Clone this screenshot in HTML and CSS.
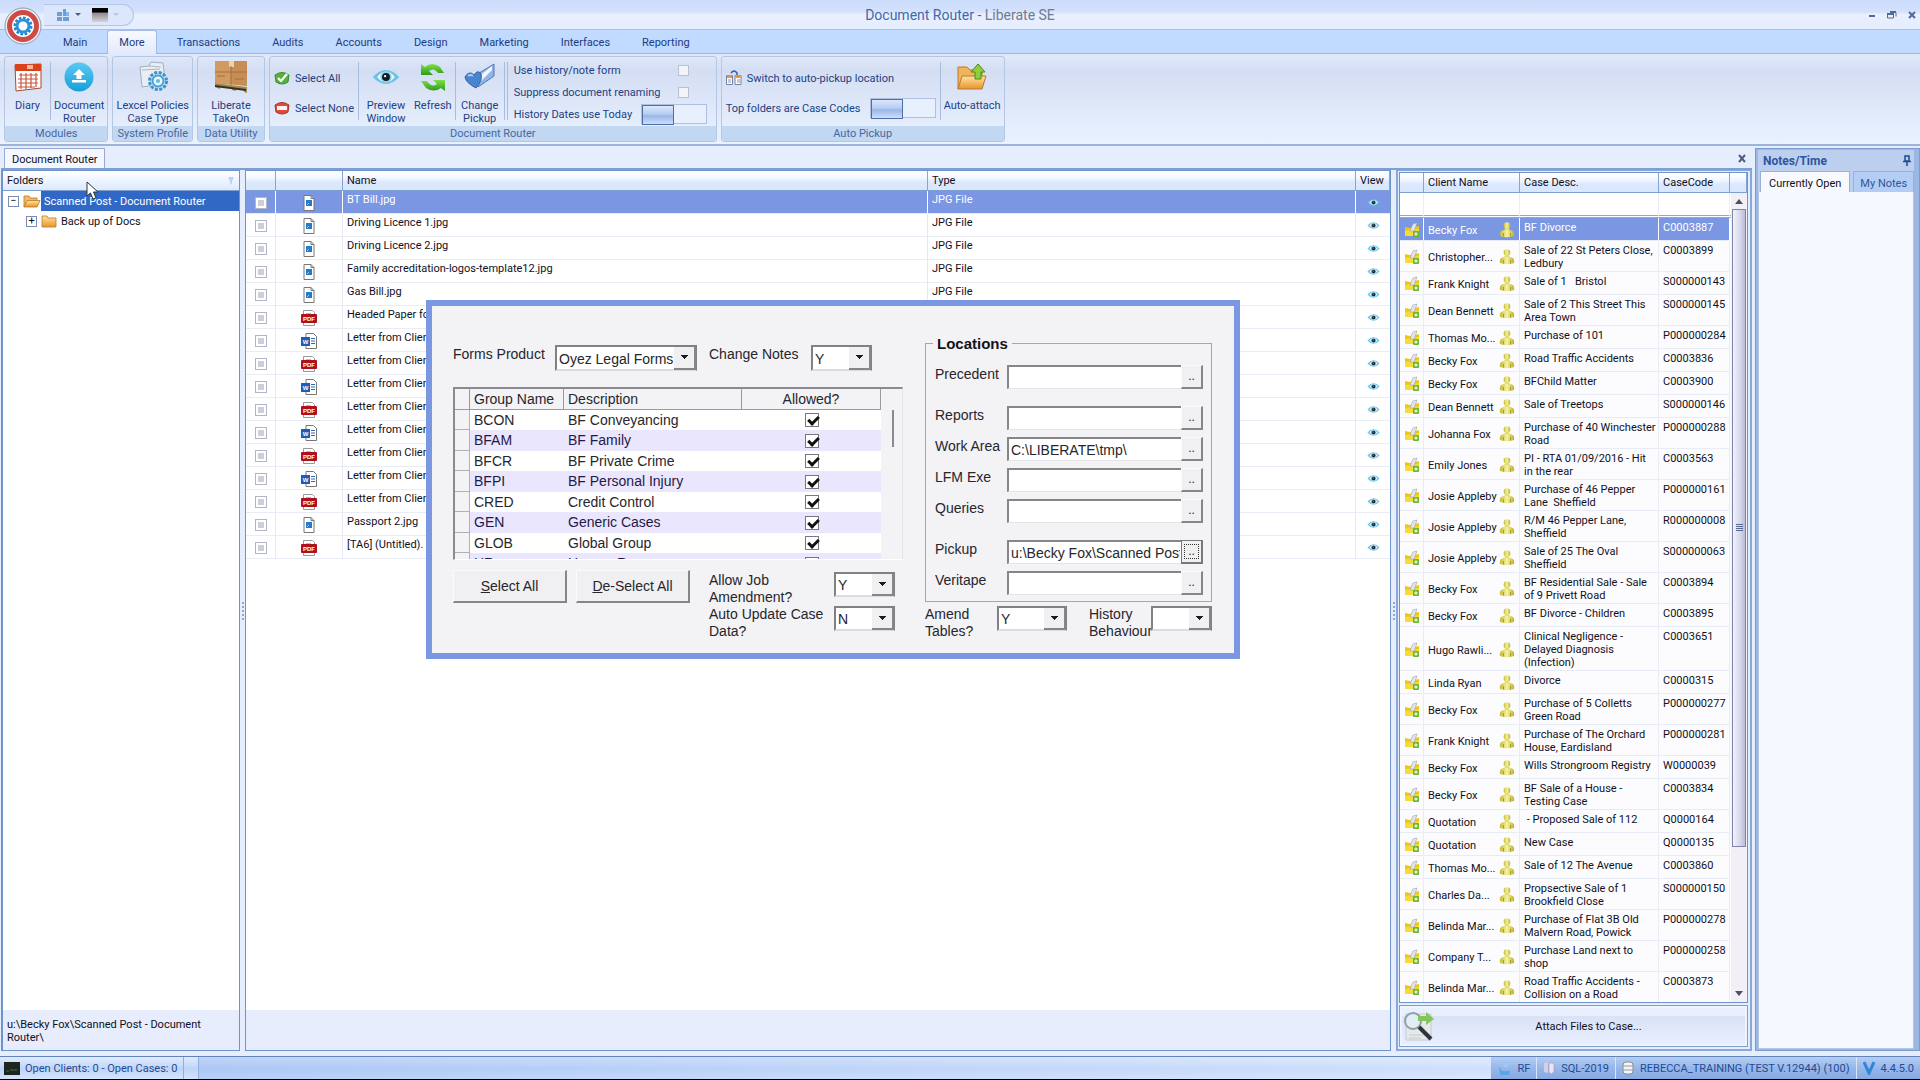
FILE: index.html
```html
<!DOCTYPE html>
<html lang="en">
<head>
	<meta charset="UTF-8">
	<meta name="viewport" content="width=device-width, initial-scale=1">
	<title>Document Router - Liberate SE</title>
	<link rel="stylesheet" href="styles.css">
</head>
<body>
<svg class="defs" aria-hidden="true">
	<defs>
		<linearGradient id="g-folder" x2="0" y2="1"><stop offset="0" stop-color="#ffe3a0"/><stop offset="1" stop-color="#e8942c"/></linearGradient>
		<linearGradient id="g-blue" x2="0" y2="1"><stop offset="0" stop-color="#5cc8f2"/><stop offset="1" stop-color="#15a0d8"/></linearGradient>
		<linearGradient id="g-pawn" x2="1" y2="0"><stop offset="0" stop-color="#c4b92c"/><stop offset=".5" stop-color="#f6f3a4"/><stop offset="1" stop-color="#bdb026"/></linearGradient>
		<linearGradient id="g-green" x2="0" y2="1"><stop offset="0" stop-color="#7fe04a"/><stop offset="1" stop-color="#2c9a18"/></linearGradient>
	</defs>
</svg>
<svg class="symbols" aria-hidden="true">
	<symbol id="i-jpg" viewBox="0 0 16 16"><path d="M3 .5h7l3 3v12H3z" fill="#fff" stroke="#777"/><path d="M10 .5v3h3" fill="none" stroke="#777"/><rect x="5" y="5" width="6" height="6" fill="#1b7fd6"/><path d="M5 11l6-5v5z" fill="#3b6fc0"/><path d="M6 10l2-2" stroke="#8fd0ff"/></symbol>
	<symbol id="i-pdf" viewBox="0 0 16 16"><path d="M2.500 5V.5h9l2 2V5M2.500 12v3.500h11V12" fill="#fff" stroke="#999"/><path d="M5 3.500h5" stroke="#bbb"/><rect y="4" width="16" height="9" rx="1" fill="#b0101c"/><text x="8" y="11" text-anchor="middle" class="pdf-txt">PDF</text></symbol>
	<symbol id="i-doc" viewBox="0 0 16 16"><path d="M5 .5h7.500l3 3v12H5z" fill="#fff" stroke="#777"/><path d="M10 5.500h4M10 8h4M10 10.500h4" stroke="#2a68b8"/><rect y="4" width="9" height="9" fill="#1d5eb4"/><text x="4.500" y="11" text-anchor="middle" class="pdf-txt">W</text></symbol>
	<symbol id="i-eye" viewBox="0 0 32 18"><path d="M1 9Q8 1 16 1t15 8q-7 8-15 8T1 9z" fill="#6cc3e4"/><path d="M6 9q4-6 10-6t10 6q-4 6-10 6T6 9z" fill="#e9fbff"/><circle cx="16" cy="9" r="6.500" fill="#8fcfe8"/><circle cx="16" cy="9" r="4.500" fill="#111c28"/><circle cx="15" cy="8" r="1.300" fill="#fff"/></symbol>
	<symbol id="i-case" viewBox="0 0 16 16"><path d="M1 5l5 1 9-2v10H1z" fill="#ecc814"/><path d="M1 9l14-2v7H1z" fill="#f7dc35"/><path d="M6 9l3-7 4-1-3 8z" fill="#e6e6ee" stroke="#a9a9b8" stroke-width=".7"/><rect x="9" y="9" width="6" height="6" rx="1" fill="#6cb52c"/><path d="M12 10.200v3.600M10.200 12h3.600" stroke="#fff"/></symbol>
	<symbol id="i-pawn" viewBox="0 0 16 16"><circle cx="8" cy="3.500" r="3.300" fill="url(#g-pawn)"/><path d="M6 6h4l1 3H5z" fill="#e4df6a"/><path d="M1 14Q0 8.500 5 8h6q5 .5 4 6-7 2.500-14 0z" fill="url(#g-pawn)"/><path d="M4.500 11v3.500M11.500 11v3.500" stroke="#95901c" stroke-width=".8"/></symbol>
	<symbol id="i-folder" viewBox="0 0 16 14"><path d="M1 2h5l1 2h8v9H1z" fill="url(#g-folder)" stroke="#b87a2c" stroke-width=".8"/></symbol>
	<symbol id="i-folder-open" viewBox="0 0 18 14"><path d="M1 13V2h5l1 2h7v3" fill="#f3b765" stroke="#b87a2c" stroke-width=".8"/><path d="M4 6.500h13L14 13H1z" fill="url(#g-folder)" stroke="#b87a2c" stroke-width=".8"/></symbol>
</svg>

<header class="titlebar">
	<div class="quick">
		<button class="plain" aria-label="Layout"><svg width="14" height="14" viewBox="0 0 14 14"><path d="M1 4h5v4H1zM7 1h3v7H7zM1 9h5v4H1zM7 9h6v4H7z" fill="#6a9fd8"/><path d="M10 4h3v4h-3z" fill="#8ab6e6"/></svg><span class="caret"></span></button>
		<button class="plain" aria-label="Style"><span class="swatch"></span><span class="caret faint"></span></button>
	</div>
	<h1>Document Router - <span>Liberate SE</span></h1>
	<div class="winbtns">
		<button class="plain" aria-label="Minimise"><svg width="8" height="10"><path d="M1 6h6" stroke="#51699c" stroke-width="2"/></svg></button>
		<button class="plain" aria-label="Restore"><svg width="10" height="10"><path d="M3 2.500h6v4M.5 4h6v4h-6z" fill="none" stroke="#51699c"/><path d="M3 2h6M0 4h7" stroke="#51699c" stroke-width="2"/></svg></button>
		<button class="plain" aria-label="Close"><svg width="8" height="10"><path d="M1 2l6 6M7 2L1 8" stroke="#51699c" stroke-width="2"/></svg></button>
	</div>
</header>
<button class="orb" aria-label="Application menu">
	<svg width="38" height="38" viewBox="0 0 38 38"><circle cx="19" cy="19" r="18" fill="#eceef2" stroke="#8f9bb5"/><circle cx="19" cy="19" r="13.500" fill="#fff" stroke="#cf4a45" stroke-width="5"/><circle cx="19" cy="19" r="7.500" fill="none" stroke="#1e86d0" stroke-width="4" stroke-dasharray="2.400 1.500"/><circle cx="19" cy="19" r="6" fill="none" stroke="#2c93da" stroke-width="3"/></svg>
</button>

<nav class="tabs">
	<a href="#">Main</a>
	<a href="#" class="active">More</a>
	<a href="#">Transactions</a>
	<a href="#">Audits</a>
	<a href="#">Accounts</a>
	<a href="#">Design</a>
	<a href="#">Marketing</a>
	<a href="#">Interfaces</a>
	<a href="#">Reporting</a>
</nav>

<section class="ribbon">
	<div class="group">
		<div class="tools">
			<button class="big narrow"><svg width="32" height="32" viewBox="0 0 32 32"><path d="M3 4l26-1v24L4 30z" fill="#fff" stroke="#a8482e"/><path d="M3 3h26v7H3z" fill="#d8431c"/><path d="M15 4h6v4h-6z" fill="#f5b8a2"/><path d="M7 14h19M6 18h20M6 22h20M6 26h17M9 12v16M14 12v16M19 12v15M24 12v14" stroke="#c9553c" stroke-width="1.200"/></svg>Diary</button>
			<span class="sep"></span>
			<button class="big"><svg width="32" height="32" viewBox="0 0 32 32"><circle cx="16" cy="16" r="14.500" fill="url(#g-blue)"/><path d="M16 8l6 6h-3.500v4h-5v-4H10zM9 19h14v2.500H9z" fill="#fff"/></svg>Document<br>Router</button>
		</div>
		<div class="caption">Modules</div>
	</div>
	<div class="group profile">
		<div class="tools">
			<button class="big"><svg width="32" height="32" viewBox="0 0 32 32"><path d="M3 6l9-1 2-4 12 1 1 9v12L5 26z" fill="#e9eef4" stroke="#9fb0c0"/><path d="M12 5l12 1M5 9l18-1" stroke="#a9b6c4"/><circle cx="21" cy="20" r="8.500" fill="#cde8f6" stroke="#3d90c8" stroke-width="3" stroke-dasharray="3 1.500"/><circle cx="21" cy="20" r="5.500" fill="#e8f6ff" stroke="#4aa0d4" stroke-width="2"/><circle cx="21" cy="20" r="2" fill="#6ab4de"/></svg>Lexcel Policies<br>Case Type</button>
		</div>
		<div class="caption">System Profile</div>
	</div>
	<div class="group utility">
		<div class="tools">
			<button class="big"><svg width="32" height="32" viewBox="0 0 32 32"><path d="M0 0h32v25L0 22z" fill="#c68d55"/><path d="M0 0h16v23L0 22z" fill="#d09a62"/><path d="M14 0h5v6h-5z" fill="#ead0ac"/><path d="M0 11h32M16 5v19M2 15h8M20 18h9" stroke="#a76d3c"/><path d="M0 22l32 4v6l-3-1v-2l-8-1v2l-4-1v-2L5 26v2l-5-2z" fill="#a58a50"/><path d="M0 25l31 4" stroke="#3c3020" stroke-width="2"/></svg>Liberate<br>TakeOn</button>
		</div>
		<div class="caption">Data Utility</div>
	</div>
	<div class="group">
		<div class="tools">
			<div class="stack">
				<button class="small"><svg width="16" height="16" viewBox="0 0 16 16"><path d="M1 5q7-5 14 0l-1 7q-6 4-12 0z" fill="#55b03c" stroke="#3f8a2e"/><path d="M4 8l3 3 6-7" fill="none" stroke="#fff" stroke-width="2.200"/></svg>Select All</button>
				<button class="small"><svg width="16" height="16" viewBox="0 0 16 16"><path d="M1 5q7-5 14 0l-1 7q-6 4-12 0z" fill="#e04a38" stroke="#a83428"/><path d="M3 6h10v4H3z" fill="#fff3f0"/></svg>Select None</button>
			</div>
			<span class="sep"></span>
			<button class="big"><svg width="32" height="32" viewBox="0 0 32 32"><use href="#i-eye" x="2" y="7" width="28" height="18"/></svg>Preview<br>Window</button>
			<button class="big refresh"><svg width="32" height="32" viewBox="0 0 32 32"><path d="M4 3l4 3q7-6 15 0l4 6h-6q-4-6-9-2l4 4H4z" fill="url(#g-green)"/><path d="M28 30l-4-3q-7 5-15 0l-5-7h6q5 7 10 3l-4-4h12z" fill="url(#g-green)"/></svg>Refresh</button>
			<span class="sep"></span>
			<button class="big pickup"><svg width="32" height="32" viewBox="0 0 32 32"><path d="M12 14L30 3v12L14 26z" fill="#8fb6e6" stroke="#4f78b8"/><path d="M13 17L28 5v4L15 22z" fill="#f2f7ff"/><path d="M1 16q4-7 9-2 4-6 7-1 2 6-5 14Q2 22 1 16z" fill="#4a84cf" stroke="#2f62a8"/><path d="M4 15q2-2 5 0" stroke="#a8cdf4" stroke-width="2" fill="none"/></svg>Change<br>Pickup</button>
			<span class="sep"></span>
			<span class="sep"></span>
			<div class="options">
				<div class="opt"><label for="o-hist">Use history/note form</label><input type="checkbox" id="o-hist"></div>
				<div class="opt"><label for="o-supp">Suppress document renaming</label><input type="checkbox" id="o-supp"></div>
				<div class="opt"><label for="o-today">History Dates use Today</label><input type="checkbox" role="switch" class="switch" id="o-today"></div>
			</div>
		</div>
		<div class="caption">Document Router</div>
	</div>
	<div class="group">
		<div class="tools">
			<div class="stack">
				<button class="small"><svg width="16" height="16" viewBox="0 0 16 16"><path d="M.5 5.500h6v9h-6zM9 5.500h6v9H9z" fill="#fff" stroke="#7484a8"/><path d="M1 5h5v3H1zM9.500 5h5v3h-5z" fill="#f09038"/><path d="M2 10h3M2 12h3M11 10h3M11 12h3" stroke="#8898b8"/><path d="M5 3q3-4 6 0v2" fill="none" stroke="#3460a8" stroke-width="1.500"/></svg>Switch to auto-pickup location</button>
				<div class="small"><label for="o-top">Top folders are Case Codes</label><input type="checkbox" role="switch" class="switch" id="o-top"></div>
			</div>
			<span class="sep"></span>
			<button class="big"><svg width="32" height="32" viewBox="0 0 32 32"><path d="M2 28V6h9l3 3h12v6" fill="#f0b45a" stroke="#b87a2c"/><path d="M6 15h24l-4 13H2z" fill="url(#g-folder)" stroke="#b87a2c"/><path d="M22 3l7 8h-4v7h-6v-7h-4z" fill="#8fcf3a" stroke="#4a8a1c"/></svg>Auto-attach</button>
		</div>
		<div class="caption">Auto Pickup</div>
	</div>
</section>

<main class="workspace">
	<div class="docs">
		<div class="doctabs">
			<a href="#">Document Router</a>
			<button class="plain" aria-label="Close tab"><svg width="8" height="9"><path d="M1 1l6 7M7 1L1 8" stroke="#4c5c80" stroke-width="2"/></svg></button>
		</div>
		<div class="panes">
			<section class="folders">
				<h2>Folders <svg width="8" height="10"><path d="M1 1h6L5 5v4L3 7V5z" fill="#b4d4f8"/></svg></h2>
				<ul class="tree">
					<li class="selected"><button class="exp">&minus;</button><svg width="18" height="14"><use href="#i-folder-open"/></svg><span>Scanned Post - Document Router</span></li>
					<li class="child"><button class="exp">+</button><svg width="16" height="14"><use href="#i-folder"/></svg><span>Back up of Docs</span></li>
				</ul>
				<p class="path">u:\Becky Fox\Scanned Post - Document Router\</p>
			</section>
			<div class="split"></div>
			<section class="files">
				<table>
					<colgroup><col class="w-chk"><col class="w-ico"><col class="w-name"><col class="w-type"><col class="w-view"></colgroup>
					<thead><tr><th></th><th></th><th>Name</th><th>Type</th><th>View</th></tr></thead>
					<tbody>
						<tr class="selected"><td><input type="checkbox" aria-label="BT Bill"></td><td><svg><use href="#i-jpg"/></svg></td><td>BT Bill.jpg</td><td>JPG File</td><td><svg><use href="#i-eye"/></svg></td></tr>
						<tr><td><input type="checkbox" aria-label="Driving Licence 1"></td><td><svg><use href="#i-jpg"/></svg></td><td>Driving Licence 1.jpg</td><td>JPG File</td><td><svg><use href="#i-eye"/></svg></td></tr>
						<tr><td><input type="checkbox" aria-label="Driving Licence 2"></td><td><svg><use href="#i-jpg"/></svg></td><td>Driving Licence 2.jpg</td><td>JPG File</td><td><svg><use href="#i-eye"/></svg></td></tr>
						<tr><td><input type="checkbox" aria-label="Family accreditation"></td><td><svg><use href="#i-jpg"/></svg></td><td>Family accreditation-logos-template12.jpg</td><td>JPG File</td><td><svg><use href="#i-eye"/></svg></td></tr>
						<tr><td><input type="checkbox" aria-label="Gas Bill"></td><td><svg><use href="#i-jpg"/></svg></td><td>Gas Bill.jpg</td><td>JPG File</td><td><svg><use href="#i-eye"/></svg></td></tr>
						<tr><td><input type="checkbox" aria-label="Headed Paper"></td><td><svg><use href="#i-pdf"/></svg></td><td>Headed Paper fo</td><td></td><td><svg><use href="#i-eye"/></svg></td></tr>
						<tr><td><input type="checkbox" aria-label="Letter 1"></td><td><svg><use href="#i-doc"/></svg></td><td>Letter from Client</td><td></td><td><svg><use href="#i-eye"/></svg></td></tr>
						<tr><td><input type="checkbox" aria-label="Letter 2"></td><td><svg><use href="#i-pdf"/></svg></td><td>Letter from Client</td><td></td><td><svg><use href="#i-eye"/></svg></td></tr>
						<tr><td><input type="checkbox" aria-label="Letter 3"></td><td><svg><use href="#i-doc"/></svg></td><td>Letter from Client</td><td></td><td><svg><use href="#i-eye"/></svg></td></tr>
						<tr><td><input type="checkbox" aria-label="Letter 4"></td><td><svg><use href="#i-pdf"/></svg></td><td>Letter from Client</td><td></td><td><svg><use href="#i-eye"/></svg></td></tr>
						<tr><td><input type="checkbox" aria-label="Letter 5"></td><td><svg><use href="#i-doc"/></svg></td><td>Letter from Client</td><td></td><td><svg><use href="#i-eye"/></svg></td></tr>
						<tr><td><input type="checkbox" aria-label="Letter 6"></td><td><svg><use href="#i-pdf"/></svg></td><td>Letter from Client</td><td></td><td><svg><use href="#i-eye"/></svg></td></tr>
						<tr><td><input type="checkbox" aria-label="Letter 7"></td><td><svg><use href="#i-doc"/></svg></td><td>Letter from Client</td><td></td><td><svg><use href="#i-eye"/></svg></td></tr>
						<tr><td><input type="checkbox" aria-label="Letter 8"></td><td><svg><use href="#i-pdf"/></svg></td><td>Letter from Client</td><td></td><td><svg><use href="#i-eye"/></svg></td></tr>
						<tr><td><input type="checkbox" aria-label="Passport 2"></td><td><svg><use href="#i-jpg"/></svg></td><td>Passport 2.jpg</td><td></td><td><svg><use href="#i-eye"/></svg></td></tr>
						<tr><td><input type="checkbox" aria-label="TA6"></td><td><svg><use href="#i-pdf"/></svg></td><td>[TA6] (Untitled).</td><td></td><td><svg><use href="#i-eye"/></svg></td></tr>
					</tbody>
				</table>
				<div class="files-foot"></div>
			</section>
			<div class="split"></div>
			<section class="cases">
				<div class="case-list">
					<table>
						<colgroup><col class="w-c1"><col class="w-c2"><col class="w-c3"><col><col class="w-c5"><col class="w-c6"></colgroup>
						<thead><tr><th></th><th colspan="2">Client Name</th><th>Case Desc.</th><th>CaseCode</th><th></th></tr></thead>
						<tbody>
							<tr class="filter"><td></td><td colspan="2"></td><td></td><td></td><td></td></tr>
							<tr class="selected"><td><svg><use href="#i-case"/></svg></td><td>Becky Fox</td><td><svg><use href="#i-pawn"/></svg></td><td>BF Divorce</td><td>C0003887</td><td></td></tr>
							<tr><td><svg><use href="#i-case"/></svg></td><td>Christopher...</td><td><svg><use href="#i-pawn"/></svg></td><td>Sale of 22 St Peters Close, Ledbury</td><td>C0003899</td><td></td></tr>
							<tr><td><svg><use href="#i-case"/></svg></td><td>Frank Knight</td><td><svg><use href="#i-pawn"/></svg></td><td>Sale of 1 &nbsp; Bristol</td><td>S000000143</td><td></td></tr>
							<tr><td><svg><use href="#i-case"/></svg></td><td>Dean Bennett</td><td><svg><use href="#i-pawn"/></svg></td><td>Sale of 2 This Street This<br>Area Town</td><td>S000000145</td><td></td></tr>
							<tr><td><svg><use href="#i-case"/></svg></td><td>Thomas Mo...</td><td><svg><use href="#i-pawn"/></svg></td><td>Purchase of 101</td><td>P000000284</td><td></td></tr>
							<tr><td><svg><use href="#i-case"/></svg></td><td>Becky Fox</td><td><svg><use href="#i-pawn"/></svg></td><td>Road Traffic Accidents</td><td>C0003836</td><td></td></tr>
							<tr><td><svg><use href="#i-case"/></svg></td><td>Becky Fox</td><td><svg><use href="#i-pawn"/></svg></td><td>BFChild Matter</td><td>C0003900</td><td></td></tr>
							<tr><td><svg><use href="#i-case"/></svg></td><td>Dean Bennett</td><td><svg><use href="#i-pawn"/></svg></td><td>Sale of Treetops</td><td>S000000146</td><td></td></tr>
							<tr><td><svg><use href="#i-case"/></svg></td><td>Johanna Fox</td><td><svg><use href="#i-pawn"/></svg></td><td>Purchase of 40 Winchester<br>Road</td><td>P000000288</td><td></td></tr>
							<tr><td><svg><use href="#i-case"/></svg></td><td>Emily Jones</td><td><svg><use href="#i-pawn"/></svg></td><td>PI - RTA 01/09/2016 - Hit<br>in the rear</td><td>C0003563</td><td></td></tr>
							<tr><td><svg><use href="#i-case"/></svg></td><td>Josie Appleby</td><td><svg><use href="#i-pawn"/></svg></td><td>Purchase of 46 Pepper<br>Lane&nbsp; Sheffield</td><td>P000000161</td><td></td></tr>
							<tr><td><svg><use href="#i-case"/></svg></td><td>Josie Appleby</td><td><svg><use href="#i-pawn"/></svg></td><td>R/M 46 Pepper Lane,<br>Sheffield</td><td>R000000008</td><td></td></tr>
							<tr><td><svg><use href="#i-case"/></svg></td><td>Josie Appleby</td><td><svg><use href="#i-pawn"/></svg></td><td>Sale of 25 The Oval<br>Sheffield</td><td>S000000063</td><td></td></tr>
							<tr><td><svg><use href="#i-case"/></svg></td><td>Becky Fox</td><td><svg><use href="#i-pawn"/></svg></td><td>BF Residential Sale - Sale<br>of 9 Privett Road</td><td>C0003894</td><td></td></tr>
							<tr><td><svg><use href="#i-case"/></svg></td><td>Becky Fox</td><td><svg><use href="#i-pawn"/></svg></td><td>BF Divorce - Children</td><td>C0003895</td><td></td></tr>
							<tr><td><svg><use href="#i-case"/></svg></td><td>Hugo Rawli...</td><td><svg><use href="#i-pawn"/></svg></td><td>Clinical Negligence -<br>Delayed Diagnosis<br>(Infection)</td><td>C0003651</td><td></td></tr>
							<tr><td><svg><use href="#i-case"/></svg></td><td>Linda Ryan</td><td><svg><use href="#i-pawn"/></svg></td><td>Divorce</td><td>C0000315</td><td></td></tr>
							<tr><td><svg><use href="#i-case"/></svg></td><td>Becky Fox</td><td><svg><use href="#i-pawn"/></svg></td><td>Purchase of 5 Colletts<br>Green Road</td><td>P000000277</td><td></td></tr>
							<tr><td><svg><use href="#i-case"/></svg></td><td>Frank Knight</td><td><svg><use href="#i-pawn"/></svg></td><td>Purchase of The Orchard<br>House, Eardisland</td><td>P000000281</td><td></td></tr>
							<tr><td><svg><use href="#i-case"/></svg></td><td>Becky Fox</td><td><svg><use href="#i-pawn"/></svg></td><td>Wills Strongroom Registry</td><td>W0000039</td><td></td></tr>
							<tr><td><svg><use href="#i-case"/></svg></td><td>Becky Fox</td><td><svg><use href="#i-pawn"/></svg></td><td>BF Sale of a House -<br>Testing Case</td><td>C0003834</td><td></td></tr>
							<tr><td><svg><use href="#i-case"/></svg></td><td>Quotation</td><td><svg><use href="#i-pawn"/></svg></td><td>&nbsp;- Proposed Sale of 112</td><td>Q0000164</td><td></td></tr>
							<tr><td><svg><use href="#i-case"/></svg></td><td>Quotation</td><td><svg><use href="#i-pawn"/></svg></td><td>New Case</td><td>Q0000135</td><td></td></tr>
							<tr><td><svg><use href="#i-case"/></svg></td><td>Thomas Mo...</td><td><svg><use href="#i-pawn"/></svg></td><td>Sale of 12 The Avenue</td><td>C0003860</td><td></td></tr>
							<tr><td><svg><use href="#i-case"/></svg></td><td>Charles Da...</td><td><svg><use href="#i-pawn"/></svg></td><td>Propsective Sale of 1<br>Brookfield Close</td><td>S000000150</td><td></td></tr>
							<tr><td><svg><use href="#i-case"/></svg></td><td>Belinda Mar...</td><td><svg><use href="#i-pawn"/></svg></td><td>Purchase of Flat 3B Old<br>Malvern Road, Powick</td><td>P000000278</td><td></td></tr>
							<tr><td><svg><use href="#i-case"/></svg></td><td>Company T...</td><td><svg><use href="#i-pawn"/></svg></td><td>Purchase Land next to<br>shop</td><td>P000000258</td><td></td></tr>
							<tr><td><svg><use href="#i-case"/></svg></td><td>Belinda Mar...</td><td><svg><use href="#i-pawn"/></svg></td><td>Road Traffic Accidents -<br>Collision on a Road</td><td>C0003873</td><td></td></tr>
						</tbody>
					</table>
					<div class="scroll"><i class="up"></i><span class="thumb"></span><i class="down"></i></div>
				</div>
				<button class="attach"><svg width="30" height="32" viewBox="0 0 30 32"><path d="M2 4h25v26H2z" fill="#e6e9ea" stroke="#c4ccd0"/><path d="M5 25h20M5 28h12" stroke="#c8cccf"/><circle cx="9" cy="11" r="8" fill="#dfeef4" fill-opacity=".85" stroke="#8fa0a8" stroke-width="2"/><path d="M15 17l12 12" stroke="#30343a" stroke-width="4"/><path d="M14 6h8V2l8 7-8 6v-4h-8z" fill="#86c460"/></svg><span>Attach Files to Case...</span></button>
			</section>
		</div>
	</div>
	<aside class="notes">
		<h2>Notes/Time <svg width="8" height="11"><path d="M2 1h4v5H2zM0 6.500h8M4 7v4" fill="none" stroke="#204a94" stroke-width="1.500"/></svg></h2>
		<div class="notes-tabs"><a href="#" class="active">Currently Open</a><a href="#">My Notes</a></div>
		<div class="notes-body"></div>
	</aside>
</main>

<footer class="status">
	<span class="cell first"><svg width="16" height="13"><path d="M0 0h16v13H0z" fill="#1b261e"/><path d="M2 9h3M6 8h7" stroke="#4a6a4c"/></svg>Open Clients: 0 - Open Cases: 0</span>
	<span class="cell gap"></span>
	<span class="fill"></span>
	<span class="cell dark"><svg width="14" height="14"><circle cx="9" cy="4" r="2.500" fill="#9ccaf5"/><path d="M2 6l3 4h8l-1 4H3z" fill="#5ea4ea"/></svg>RF</span>
	<span class="cell dark"><svg width="12" height="14"><path d="M1 2l4-1v11l-4-1z" fill="#d8cde6"/><path d="M6 2h5v9l-3 2-2-2z" fill="#ece4ee" stroke="#b09ab8" stroke-width=".7"/></svg>SQL-2019</span>
	<span class="cell dark"><svg width="12" height="14"><rect x="1" y="1" width="10" height="12" rx="3" fill="#f4f4f4" stroke="#8c8c94"/><path d="M1 5h10M1 9h10" stroke="#9a9aa2"/></svg>REBECCA_TRAINING (TEST V.12944) (100)</span>
	<span class="cell dark last"><svg width="12" height="14"><path d="M1 1l5 11 5-11" fill="none" stroke="#2f86d8" stroke-width="3"/></svg>4.4.5.0</span>
</footer>

<form class="dialog" role="dialog" aria-label="Forms and locations">
	<div class="left">
		<div class="line">
			<label for="d-form">Forms Product</label>
			<span class="combo forms"><select id="d-form"><option>Oyez Legal Forms Suite</option></select></span>
			<label for="d-notes">Change Notes</label>
			<span class="combo"><select id="d-notes"><option>Y</option><option>N</option></select></span>
		</div>
		<div class="groups">
			<table>
				<colgroup><col class="w-g1"><col class="w-g2"><col class="w-g3"><col></colgroup>
				<thead><tr><th></th><th>Group Name</th><th>Description</th><th>Allowed?</th></tr></thead>
				<tbody>
					<tr><td></td><td>BCON</td><td>BF Conveyancing</td><td><input type="checkbox" aria-label="BCON" checked></td></tr>
					<tr><td></td><td>BFAM</td><td>BF Family</td><td><input type="checkbox" aria-label="BFAM" checked></td></tr>
					<tr><td></td><td>BFCR</td><td>BF Private Crime</td><td><input type="checkbox" aria-label="BFCR" checked></td></tr>
					<tr><td></td><td>BFPI</td><td>BF Personal Injury</td><td><input type="checkbox" aria-label="BFPI" checked></td></tr>
					<tr><td></td><td>CRED</td><td>Credit Control</td><td><input type="checkbox" aria-label="CRED" checked></td></tr>
					<tr><td></td><td>GEN</td><td>Generic Cases</td><td><input type="checkbox" aria-label="GEN" checked></td></tr>
					<tr><td></td><td>GLOB</td><td>Global Group</td><td><input type="checkbox" aria-label="GLOB" checked></td></tr>
					<tr><td></td><td>HR</td><td>Human Resources</td><td><input type="checkbox" aria-label="HR" checked></td></tr>
				</tbody>
			</table>
			<span class="bar"></span>
		</div>
		<div class="actions">
			<button type="button"><u>S</u>elect All</button>
			<button type="button"><u>D</u>e-Select All</button>
			<div class="pairs">
				<label for="d-job">Allow Job Amendment?</label>
				<span class="combo"><select id="d-job"><option>Y</option><option>N</option></select></span>
				<label for="d-auto">Auto Update Case Data?</label>
				<span class="combo"><select id="d-auto"><option>N</option><option>Y</option></select></span>
			</div>
		</div>
	</div>
	<div class="right">
		<fieldset>
			<legend>Locations</legend>
			<div class="loc after"><label for="l-pre">Precedent</label><input type="text" id="l-pre"><button type="button">..</button></div>
			<div class="loc"><label for="l-rep">Reports</label><input type="text" id="l-rep"><button type="button">..</button></div>
			<div class="loc"><label for="l-work">Work Area</label><input type="text" id="l-work" value="C:\LIBERATE\tmp\"><button type="button">..</button></div>
			<div class="loc"><label for="l-lfm">LFM Exe</label><input type="text" id="l-lfm"><button type="button">..</button></div>
			<div class="loc after"><label for="l-que">Queries</label><input type="text" id="l-que"><button type="button">..</button></div>
			<div class="loc"><label for="l-pick">Pickup</label><input type="text" id="l-pick" value="u:\Becky Fox\Scanned Post"><button type="button" class="focus"><span>..</span></button></div>
			<div class="loc"><label for="l-ver">Veritape</label><input type="text" id="l-ver"><button type="button">..</button></div>
		</fieldset>
		<div class="amend">
			<label for="d-amend">Amend Tables?</label>
			<span class="combo"><select id="d-amend"><option>Y</option><option>N</option></select></span>
			<label for="d-hist">History Behaviour</label>
			<span class="combo"><select id="d-hist"><option></option></select></span>
		</div>
	</div>
</form>

<svg class="cursor" width="14" height="20" viewBox="0 0 14 20" aria-hidden="true"><path d="M1 1v14l3.500-3 2.500 6 3-1-2.500-6H12z" fill="#fff" stroke="#333"/></svg>
</body>
</html>
```

FILE: styles.css
```css
* { box-sizing: border-box; }
body {
	margin: 0;
	height: 100vh;
	display: flex;
	flex-direction: column;
	position: relative;
	overflow: hidden;
	background: #e6eefe;
	color: #10101c;
	font: 11px/13px Roboto, "Liberation Sans", sans-serif;
}
a { color: inherit; text-decoration: none; }
h1, h2, p, ul { margin: 0; padding: 0; font-size: 11px; font-weight: normal; }
button, input, select { font: inherit; color: inherit; margin: 0; }
table { border-collapse: separate; border-spacing: 0; table-layout: fixed; width: 100%; }
svg { flex: none; }
.defs { position: absolute; width: 0; height: 0; }
.symbols { display: none; }
.pdf-txt { font: bold 6px "Liberation Sans", sans-serif; fill: #fff; }
.plain {
	display: flex;
	align-items: center;
	gap: 5px;
	padding: 0;
	border: 0;
	background: none;
}

/* title bar */
.titlebar {
	display: grid;
	grid-template-columns: 1fr auto 1fr;
	align-items: center;
	height: 30px;
	padding: 0 4px;
	background: linear-gradient(#cbdcfb, #d3e1fb 40%, #e9effe 50%, #e4edfe);
	border-bottom: 1px solid #a6c2ec;
}
.titlebar h1 { font-size: 14px; line-height: 18px; color: #3e69aa; }
.titlebar h1 span { color: #6d7b95; }
.quick {
	justify-self: start;
	display: flex;
	gap: 11px;
	height: 22px;
	margin-left: 40px;
	padding: 0 14px 0 12px;
	border: 1px solid #b2c6ea;
	border-left: 0;
	border-radius: 0 11px 11px 0;
	background: #dce7fb;
}
.caret { border: 3px solid transparent; border-top-color: #47618e; border-bottom: 0; }
.caret.faint { border-top-color: #bac6dd; }
.swatch { width: 16px; height: 14px; background: linear-gradient(#000 30%, #8e8c90 35%, #d4d2d8); }
.winbtns { justify-self: end; display: flex; gap: 11px; }
.orb {
	position: absolute;
	left: 4px;
	top: 7px;
	z-index: 2;
	padding: 0;
	border: 0;
	background: none;
}

/* ribbon */
.tabs {
	display: flex;
	gap: 8px;
	height: 24px;
	padding: 0 51px;
	background: #c1daff;
	border-bottom: 1px solid #9db7e4;
	color: #1d3c80;
}
.tabs a { padding: 6px 12px 0; height: 24px; line-height: 14px; }
.tabs .active {
	background: linear-gradient(#f6f9ff, #e3eafa);
	border: 1px solid #a3bbe6;
	border-bottom: 0;
	border-radius: 3px 3px 0 0;
	padding: 5px 11px 0;
}
.ribbon {
	display: flex;
	gap: 4px;
	height: 92px;
	padding: 2px 4px;
	background: linear-gradient(#e2eafa, #d4def3 18%, #dde6f8 50%, #e9f3ff);
	border-bottom: 2px solid #9db4d8;
	color: #223f83;
}
.group {
	display: flex;
	flex-direction: column;
	border: 1px solid #b4c6e6;
	border-radius: 3px;
}
.tools { display: flex; flex: 1; padding: 0 1px; }
.caption { height: 15px; line-height: 16px; background: #c2d7f2; color: #46689f; text-align: center; }
.big {
	display: flex;
	flex-direction: column;
	align-items: center;
	min-width: 52px;
	padding: 4px 2px 0;
	border: 0;
	background: none;
	text-align: center;
	white-space: nowrap;
}
.big svg { margin-bottom: 6px; }
.big.narrow { min-width: 43px; }
.refresh { min-width: 38px; }
.pickup { min-width: 46px; }
.profile .tools, .utility .tools { min-width: 66px; justify-content: center; }
.sep { width: 1px; margin: 5px 1px 6px; background: #a9bcdf; }
.stack { display: flex; flex-direction: column; gap: 8px; padding: 10px 3px 0; }
.small {
	display: flex;
	align-items: center;
	gap: 5px;
	height: 22px;
	padding: 0;
	border: 0;
	background: none;
}
.small .switch { margin-left: auto; }
.group:last-child .stack { width: 216px; }
.options { width: 206px; padding: 2px 8px 0 5px; }
.opt { display: flex; align-items: center; justify-content: space-between; height: 22px; white-space: nowrap; }
.opt input:not(.switch) { margin-right: 18px; }
input[type="checkbox"] {
	appearance: none;
	display: block;
	width: 11px;
	height: 11px;
	border: 1px solid #bcc0cc;
	background: #f3f4f8;
}
input.switch {
	width: 66px;
	height: 20px;
	border: 1px solid #aebfdf;
	background: #e9f0fd;
}
.switch::before {
	content: "";
	display: block;
	width: 30px;
	height: 18px;
	border: 1px solid #4f6da6;
	background: linear-gradient(#dbe7fb, #b7cdf3 45%, #98b6e8 55%, #cfdff8);
}

/* workspace */
.workspace { flex: 1; min-height: 0; display: flex; gap: 3px; padding: 2px 0 5px; }
.docs { flex: 1; min-width: 0; display: flex; flex-direction: column; }
.doctabs { display: flex; height: 20px; padding: 0 6px 0 4px; justify-content: space-between; }
.doctabs a {
	padding: 4px 7px 0;
	border: 1px solid #96acd4;
	border-bottom: 0;
	background: #f4f7ff;
}
.panes {
	flex: 1;
	min-height: 0;
	display: flex;
	margin-left: 1px;
	border-top: 2px solid #7f9fd2;
}
.folders, .files, .cases { display: flex; flex-direction: column; border: 1px solid #6f94cc; min-height: 0; }
.folders { width: 239px; border-left-width: 2px; background: #fff; }
.folders h2 {
	display: flex;
	justify-content: space-between;
	align-items: center;
	height: 20px;
	padding: 0 4px;
	border-bottom: 1px solid #7d9fd2;
	background: linear-gradient(#fff, #eef4ff 50%, #dce9fd);
}
.tree { list-style: none; flex: 1; }
.tree li { display: flex; align-items: center; height: 20px; padding-left: 5px; gap: 4px; }
.tree .child { padding-left: 23px; }
.tree li span { align-self: stretch; flex: 1; padding: 4px 0 0; }
.tree .selected span { background: #3168c6; color: #fff; padding-left: 3px; margin-left: -4px; }
.exp {
	width: 11px;
	height: 11px;
	padding: 0;
	border: 1px solid #7c8db0;
	background: #fff;
	line-height: 8px;
}
.path { height: 40px; padding: 8px 20px 0 4px; background: #e7edfd; }
.split {
	width: 5px;
	background:
		repeating-linear-gradient(#8fa8d4 0 2px, transparent 2px 4px) center / 2px 18px no-repeat,
		#e6eefe;
}
.files { flex: 1; min-width: 0; background: #fff; justify-content: space-between; }
.files-foot { height: 40px; background: #e7edfd; }
th {
	height: 20px;
	padding: 0 4px;
	font-weight: normal;
	text-align: left;
	white-space: nowrap;
	border-right: 1px solid #86a5d6;
	border-bottom: 1px solid #7d9fd2;
	background: linear-gradient(#fff, #f3f8ff 35%, #dbe8fd 60%, #d8e7fe);
}
.w-chk { width: 30px; }
.w-ico { width: 67px; }
.w-type { width: 428px; }
.w-view { width: 34px; }
.files td {
	height: 23px;
	padding: 2px 4px 0;
	vertical-align: top;
	border-right: 1px solid #e6e8f4;
	border-bottom: 1px solid #e9ebf5;
	overflow: hidden;
	white-space: nowrap;
}
.files td:first-child, .files td:nth-child(2), .files td:last-child { vertical-align: middle; }
.files td svg { display: block; width: 16px; height: 16px; margin: 0 auto; }
.files td:last-child { padding: 1px 0 0; border-right: 0; }
.files td:last-child svg { width: 13px; height: 9px; }
.files td:first-child { padding: 1px 0 0 9px; }
.files td input { width: 12px; height: 12px; border-color: #b2b4c8; box-shadow: inset 0 0 0 2px #fff; background: #cdcfd8; }
tr.selected td { background: #7b96e2; color: #fff; border-right-color: #fff; }

.cases {
	width: 356px;
	border-width: 2px;
	border-top-width: 1px;
	border-color: #88a7da;
	padding: 1px 2px 2px 1px;
	gap: 2px;
	background: #e6eefe;
}
.case-list {
	flex: 1;
	min-height: 0;
	position: relative;
	overflow: hidden;
	border: 1px solid #6f94cc;
	background: #fcfcff;
}
.w-c1 { width: 24px; }
.w-c2 { width: 71px; }
.w-c3 { width: 25px; }
.w-c5 { width: 71px; }
.w-c6 { width: 17px; }
.cases td {
	height: 23px;
	padding: 3px 0 1px 4px;
	vertical-align: top;
	white-space: nowrap;
	border-bottom: 1px solid #e8ecf7;
	border-right: 1px solid #e9ecf7;
}
.cases td:nth-child(4) { white-space: normal; }
.cases td:nth-child(2) { vertical-align: middle; padding-top: 4px; }
.cases tr:not(.filter) td:nth-child(2) { border-right: 0; }
.cases td:nth-child(1), .cases td:nth-child(3) { padding: 2px 2px 0 4px; vertical-align: middle; }
.cases td svg { display: block; width: 16px; height: 16px; }
.cases td:last-child { background: #fcfcff; border: 0; }
.cases .filter td { height: 25px; background: #fff; border-bottom: 3px double #8ba9da; }
/* scroll bar lies over the last, empty column */
.scroll {
	position: absolute;
	right: 0;
	top: 20px;
	bottom: 0;
	width: 16px;
	display: flex;
	flex-direction: column;
	align-items: center;
	padding: 6px 1px;
	background: #f2eff7;
}
.scroll i { border: 4px solid transparent; }
.scroll .up { border-bottom-color: #4b4f60; border-top: 0; border-bottom-width: 5px; }
.scroll .down { border-top-color: #4b4f60; border-bottom: 0; border-top-width: 5px; margin-top: auto; }
.thumb {
	width: 100%;
	height: 80%;
	margin-top: 5px;
	border: 1px solid #7c86ad;
	background:
		repeating-linear-gradient(#5a6894 0 1px, transparent 1px 2px) center / 7px 7px no-repeat,
		linear-gradient(90deg, #f2f3fb, #d6d7ea 60%, #b9bcda);
}
.attach {
	display: flex;
	align-items: center;
	height: 42px;
	padding: 0 4px;
	border: 1px solid #7d9fd2;
	box-shadow: inset 0 0 0 2px #edf3ff;
	background: linear-gradient(#e9effd 25%, #d9e2f7 26%, #e8effe);
}
.attach span { flex: 1; }

.notes {
	width: 165px;
	display: flex;
	flex-direction: column;
	border: 3px solid #9bb7e4;
	border-width: 2px 6px 2px 3px;
	outline: 1px solid #7b9cd0;
	outline-offset: -1px;
	background: #bccfef;
}
.notes h2 {
	display: flex;
	justify-content: space-between;
	align-items: center;
	height: 21px;
	padding: 0 3px 0 5px;
	font: bold 12px/14px Roboto, sans-serif;
	color: #2e569b;
}
.notes-tabs { display: flex; gap: 3px; height: 21px; padding-left: 2px; color: #2e569b; white-space: nowrap; }
.notes-tabs a { padding: 5px 6px 0; border: 1px solid #98b1dc; border-bottom: 0; background: #b4cdf4; }
.notes-tabs .active { background: #f7f9ff; color: #10101c; padding: 5px 8px 0; }
.notes-body { flex: 1; background: #f6f8ff; border: 1px solid #b4c4e4; border-top: 0; }

/* status bar */
.status {
	display: flex;
	height: 24px;
	border-top: 1px solid #6384b8;
	border-bottom: 1px solid #000;
	color: #234a92;
	background: linear-gradient(#dfeafe, #c9dbfa 40%, #bdd3f8 50%, #d4e4fd);
}
.cell { display: flex; align-items: center; gap: 5px; padding: 0 6px 0 4px; border-right: 1px solid #94aedb; }
.cell.gap { width: 15px; padding: 0; }
.fill { flex: 1; background: linear-gradient(90deg, rgba(150, 185, 240, .45), rgba(225, 235, 255, .5)); }
.dark {
	padding: 0 6px;
	border-right: 1px solid #d8e6fd;
	background: linear-gradient(#b5cdf3, #96b7ea 50%, #86a9e2);
}
.dark svg { margin-right: 1px; }
.dark.last { border: 0; }

/* settings dialog floats over the panes */
.dialog {
	position: absolute;
	left: 426px;
	top: 300px;
	z-index: 3;
	display: flex;
	gap: 22px;
	padding: 29px 22px 13px 21px;
	border: 6px solid #7b97e2;
	background: #f3f2f5;
	font: 14px/17px "Liberation Sans", Arial, sans-serif;
	color: #26262c;
}
.left { width: 450px; padding-top: 10px; }
.right { width: 287px; }
.line { display: flex; align-items: flex-start; height: 42px; }
.line label { width: 102px; padding-top: 1px; }
.line .forms { width: 142px; margin-right: 12px; }
.line .combo { height: 26px; }
.combo { position: relative; display: block; width: 61px; height: 25px; }
.combo select {
	appearance: none;
	width: 100%;
	height: 100%;
	padding: 2px 21px 0 2px;
	border: 2px solid #808085;
	border-bottom-color: #dcdce0;
	border-radius: 0;
	background: #fff;
	text-overflow: clip;
}
.combo::after {
	content: "";
	position: absolute;
	right: 1px;
	top: 2px;
	bottom: 1px;
	width: 20px;
	pointer-events: none;
	border-right: 2px solid #85858a;
	border-bottom: 2px solid #85858a;
	background: conic-gradient(from 315deg at 50% 85%, #1c1c20 90deg, transparent 0) center / 9px 5px no-repeat, #f0eff2;
}
.groups {
	display: flex;
	height: 173px;
	overflow: hidden;
	border-top: 2px solid #8a8a90;
	border-left: 2px solid #8a8a90;
	border-bottom: 1px solid #fff;
	border-right: 1px solid #e4e3e8;
}
.groups table { width: 426px; }
.w-g1 { width: 15px; }
.w-g2 { width: 94px; }
.w-g3 { width: 178px; }
.groups tr { height: 21px; }
.groups tbody tr:nth-child(odd) { height: 20px; }
.groups th, .groups td { height: auto; padding: 0 4px; line-height: 17px; white-space: nowrap; }
.groups th { background: #f3f2f5; border-color: #9a9aa0; height: 20px; }
.groups th:last-child { text-align: center; }
.groups td { background: #fff; }
.groups tr:nth-child(even) td { background: #eae6fd; color: #1e1a48; }
.groups td:first-child, .groups tr:nth-child(even) td:first-child {
	background: #f3f2f5;
	border: 1px solid #b0b0b6;
	border-width: 0 1px 1px 0;
}
.groups input {
	width: 14px;
	height: 14px;
	margin: 0 auto;
	border: 1px solid #77777d;
	background: #fff;
}
.groups input:checked::before {
	content: "";
	display: block;
	width: 8px;
	height: 4px;
	margin: 2px;
	border: solid #111;
	border-width: 0 0 3px 3px;
	transform: rotate(-45deg);
}
.groups .bar { width: 2px; height: 37px; margin: 21px 0 0 11px; background: #8a8a90; }
.actions { display: flex; align-items: flex-start; gap: 9px; padding-top: 10px; }
.actions > button, .loc button {
	border: 1px solid #fbfbfd;
	border-right: 2px solid #85858a;
	border-bottom: 2px solid #85858a;
	background: #f0eff2;
}
.actions > button { width: 114px; height: 33px; }
.pairs { display: grid; grid-template-columns: 125px 61px; padding: 2px 0 0 10px; }
.pairs label { height: 34px; }
fieldset {
	min-width: 0;
	margin: 0;
	padding: 13px 8px 6px 9px;
	border: 1px solid #a6a6ac;
}
legend { padding: 0 4px; margin-left: -2px; font-size: 15px; font-weight: bold; color: #141418; }
.loc { display: flex; height: 24px; margin-bottom: 7px; }
.loc.after { margin-bottom: 17px; }
.loc:last-child { margin-bottom: 0; }
.loc label { width: 72px; padding-top: 1px; }
.loc input {
	flex: 1;
	min-width: 0;
	padding: 2px 1px 0 2px;
	border: 2px solid #85858a;
	border-right: 0;
	border-bottom: 1px solid #e4e4e8;
	background: #fff;
}
.loc button { width: 22px; padding: 0; font-size: 12px; }
.loc .focus { padding: 2px; border-color: #77777c; }
.focus span { display: block; height: 15px; line-height: 13px; border: 1px dotted #333; }
.amend { display: grid; grid-template-columns: 72px 70px 84px 61px; padding-top: 4px; }
.amend .combo { width: 100%; }
.amend label:nth-of-type(2) { padding-left: 22px; }

.cursor { position: absolute; left: 86px; top: 181px; z-index: 4; }
```
